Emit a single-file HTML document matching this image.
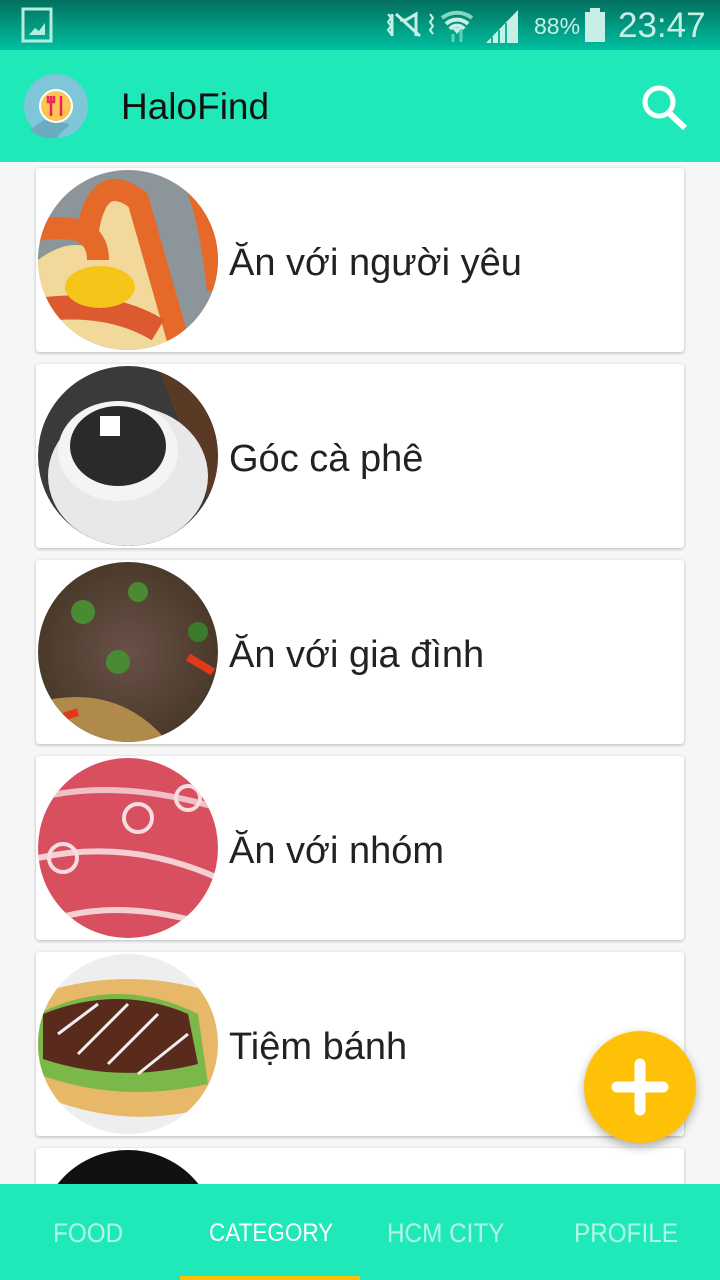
<!DOCTYPE html>
<html style="width:720px;height:1280px;overflow:hidden"><head><meta charset="utf-8"><style>
*{margin:0;padding:0;box-sizing:border-box}
body{width:720px;height:1280px;overflow:hidden;background:#f6f6f6;font-family:"Liberation Sans","Noto Sans CJK SC",sans-serif;position:relative}
.status{position:absolute;top:0;left:0;width:720px;height:50px;background:linear-gradient(#03705f,#00bfa0)}
.bar{position:absolute;top:50px;left:0;width:720px;height:112px;background:#1fe9b8}
.title{position:absolute;left:121px;font-size:37px;color:#111}
.card{position:absolute;left:36px;width:648px;height:184px;background:#fff;border-radius:3px;box-shadow:0 1px 3px rgba(0,0,0,.25);overflow:hidden}
.card svg.img{position:absolute;left:2px;top:2px}
.card .t{position:absolute;left:193px;top:74px;font-size:38px;color:#222;white-space:nowrap}
.nav{position:absolute;top:1184px;left:0;width:720px;height:96px;background:#1fe9b8;z-index:5}
.tab{position:absolute;top:34px;font-size:27px;color:#b5f5e4;transform:scaleX(.9);transform-origin:left}
.fab{position:absolute;left:584px;top:1031px;width:112px;height:112px;border-radius:50%;background:#ffc107;box-shadow:0 4px 10px rgba(0,0,0,.3);z-index:6}
</style></head><body>
<div class="status">
<svg width="720" height="50" style="position:absolute;left:0;top:0">
<rect x="23" y="9" width="28" height="32" fill="none" stroke="#b8ecdf" stroke-width="3"/>
<path d="M29 35 L35 28 L39 31 L45 23 L45 35 Z" fill="#b8ecdf"/>
<path d="M392 14v22M396 14l24 22M400 20h6l10-6v22" stroke="#c8efe6" stroke-width="3" fill="none"/>
<path d="M388 14l3 4-3 4 3 4-3 4 3 4M430 14l3 4-3 4 3 4-3 4 3 4" stroke="#c8efe6" stroke-width="2" fill="none"/>
<path d="M442 18a24 24 0 0 1 30 0" stroke="#7fd7c4" stroke-width="4" fill="none"/>
<path d="M446 24a16 16 0 0 1 22 0M450 29a9 9 0 0 1 14 0" stroke="#c8efe6" stroke-width="4" fill="none"/>
<path d="M452 28l5 6 5-6z" fill="#c8efe6"/>
<path d="M453 34v8M461 30v12" stroke="#5fd0b8" stroke-width="3"/>
<path d="M486 43L518 10V43Z" fill="#c8efe6"/>
<path d="M492 37v6M499 30v13M506 23v20" stroke="#00bfa0" stroke-width="2"/>
<text x="534" y="34" font-size="23" fill="#c8efe6" font-family="Liberation Sans">88%</text>
<rect x="585" y="12" width="20" height="30" fill="#c8efe6"/><rect x="590" y="8" width="10" height="4" fill="#c8efe6"/>
<text x="618" y="37" font-size="35" fill="#c8efe6" font-family="Liberation Sans">23:47</text>
</svg></div>
<div class="bar">
<svg width="720" height="112" style="position:absolute;left:0;top:0">
<circle cx="56" cy="56" r="32" fill="#7fc6d8"/>
<path d="M44 70 L30 80 A32 32 0 0 0 56 88 L70 74Z" fill="#6aabbf"/>
<circle cx="56" cy="56" r="16" fill="#ffc456" stroke="#fff" stroke-width="2"/>
<path d="M51 46v20M48 46v6h6v-6M61 46v20" stroke="#e8245a" stroke-width="2.5" fill="none"/>
<circle cx="659" cy="52" r="14" fill="none" stroke="#fff" stroke-width="5"/>
<path d="M669 63L685 78" stroke="#fff" stroke-width="6"/>
</svg>
<div class="title" style="top:36px">HaloFind</div>
</div>

<div class="card" style="top:168px">
<svg class="img" width="180" height="180"><defs><clipPath id="c1"><circle cx="90" cy="90" r="90"/></clipPath></defs>
<g clip-path="url(#c1)"><rect width="180" height="180" fill="#8c959a"/>
<path d="M0 90 Q40 60 70 90 L60 60 Q70 10 100 40 Q120 110 150 180 L0 180Z" fill="#f2d89a"/>
<path d="M50 60 Q60 0 100 30 Q120 100 140 170" stroke="#e56a2a" stroke-width="22" fill="none"/>
<path d="M0 60 Q60 50 60 90" stroke="#e56a2a" stroke-width="22" fill="none"/>
<path d="M0 140 Q70 130 120 160" stroke="#dd5a30" stroke-width="24" fill="none"/>
<path d="M150 0 Q170 30 180 120" stroke="#e56a2a" stroke-width="22" fill="none"/>
<ellipse cx="62" cy="117" rx="35" ry="21" fill="#f6c51a"/></g></svg>
<div class="t">Ăn với người yêu</div></div>

<div class="card" style="top:364px">
<svg class="img" width="180" height="180"><defs><clipPath id="c2"><circle cx="90" cy="90" r="90"/></clipPath></defs>
<g clip-path="url(#c2)"><rect width="180" height="180" fill="#3a3a3a"/>
<path d="M120 0 L180 0 L180 160 Z" fill="#5a3a24"/>
<ellipse cx="90" cy="110" rx="80" ry="70" fill="#e8e8ea"/>
<ellipse cx="80" cy="85" rx="60" ry="50" fill="#f4f4f4"/>
<ellipse cx="80" cy="80" rx="48" ry="40" fill="#2a2a2c"/>
<rect x="62" y="50" width="20" height="20" fill="#fff"/></g></svg>
<div class="t">Góc cà phê</div></div>

<div class="card" style="top:560px">
<svg class="img" width="180" height="180"><defs><clipPath id="c3"><circle cx="90" cy="90" r="90"/></clipPath><radialGradient id="g3"><stop offset="0" stop-color="#6a5048"/><stop offset="1" stop-color="#4a3a2a"/></radialGradient></defs>
<g clip-path="url(#c3)"><rect width="180" height="180" fill="url(#g3)"/>
<path d="M0 140 Q80 120 130 180 L0 180Z" fill="#b08a4a"/>
<circle cx="45" cy="50" r="12" fill="#4a8a32"/><circle cx="100" cy="30" r="10" fill="#4a8a32"/><circle cx="80" cy="100" r="12" fill="#4a8a32"/><circle cx="160" cy="70" r="10" fill="#3a7a2a"/>
<path d="M150 95 L175 110" stroke="#e03a1a" stroke-width="8"/><path d="M10 160 L40 150" stroke="#e03a1a" stroke-width="8"/></g></svg>
<div class="t">Ăn với gia đình</div></div>

<div class="card" style="top:756px">
<svg class="img" width="180" height="180"><defs><clipPath id="c4"><circle cx="90" cy="90" r="90"/></clipPath></defs>
<g clip-path="url(#c4)"><rect width="180" height="180" fill="#d85060"/>
<path d="M0 40 Q80 20 180 50" stroke="#f0c0c4" stroke-width="6" fill="none"/>
<path d="M0 100 Q90 80 180 120" stroke="#f4d0d2" stroke-width="6" fill="none"/>
<path d="M20 160 Q90 140 180 170" stroke="#f4d0d2" stroke-width="6" fill="none"/>
<circle cx="100" cy="60" r="14" fill="none" stroke="#f6dde0" stroke-width="4"/><circle cx="25" cy="100" r="14" fill="none" stroke="#f6dde0" stroke-width="4"/><circle cx="150" cy="40" r="12" fill="none" stroke="#f6dde0" stroke-width="4"/></g></svg>
<div class="t">Ăn với nhóm</div></div>

<div class="card" style="top:952px">
<svg class="img" width="180" height="180"><defs><clipPath id="c5"><circle cx="90" cy="90" r="90"/></clipPath></defs>
<g clip-path="url(#c5)"><rect width="180" height="180" fill="#eeeeee"/>
<path d="M0 40 Q90 10 180 40 L180 150 Q90 180 0 140Z" fill="#e6b868"/>
<path d="M0 60 Q80 20 160 60 L170 130 Q80 150 0 120Z" fill="#7ab84a"/>
<path d="M5 60 Q80 30 150 60 L160 110 Q80 130 5 105Z" fill="#5a2a1c"/>
<path d="M20 80 L60 50 M40 100 L90 50 M70 110 L120 60 M100 120 L150 80" stroke="#eee" stroke-width="3"/></g></svg>
<div class="t">Tiệm bánh</div></div>

<div class="card" style="top:1148px;height:40px;border-radius:3px 3px 0 0">
<svg class="img" width="180" height="180"><defs><clipPath id="c6"><circle cx="90" cy="90" r="90"/></clipPath></defs>
<g clip-path="url(#c6)"><rect width="180" height="180" fill="#111"/></g></svg></div>

<div class="nav">
<div class="tab" style="left:53px">FOOD</div>
<div class="tab" style="left:209px;color:#fff;font-size:25px;top:35px">CATEGORY</div>
<div class="tab" style="left:387px">HCM CITY</div>
<div class="tab" style="left:574px">PROFILE</div>
<div style="position:absolute;left:180px;top:92px;width:180px;height:4px;background:#ffc107"></div>
</div>

<div class="fab"><svg width="112" height="112"><path d="M56 33v46M33 56h46" stroke="#fff" stroke-width="11" stroke-linecap="round"/></svg></div>
</body></html>
